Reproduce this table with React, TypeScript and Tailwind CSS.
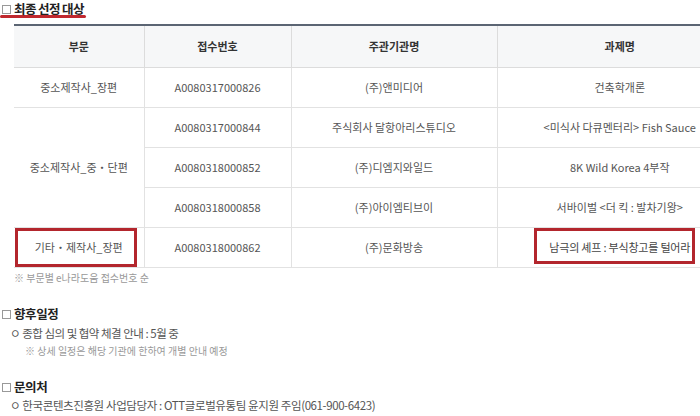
import React from 'react';

const rows = [
  { part: '중소제작사_장편', span: 1, no: 'A0080317000826', org: '(주)앤미디어', title: '건축학개론' },
  { part: '중소제작사_중・단편', span: 3, no: 'A0080317000844', org: '주식회사 달항아리스튜디오', title: '<미식사 다큐멘터리> Fish Sauce' },
  { part: null, span: 0, no: 'A0080318000852', org: '(주)디엠지와일드', title: '8K Wild Korea 4부작' },
  { part: null, span: 0, no: 'A0080318000858', org: '(주)아이엠티브이', title: '서바이벌 <더 킥 : 발차기왕>' },
  { part: '기타・제작사_장편', span: 1, no: 'A0080318000862', org: '(주)문화방송', title: '남극의 셰프 : 부식창고를 털어라', mark: true },
];

function Box() {
  return <span className="inline-block w-[9px] h-[9px] border border-[#999] mr-[3px] translate-y-[1px]" />;
}

export default function App() {
  return (
    <div
      className="w-[700px] h-[416px] overflow-hidden bg-white relative"
      style={{ fontFamily: '"Noto Sans CJK KR", "Noto Sans", sans-serif' }}
    >
      {/* 최종 선정 대상 */}
      <div className="pl-[2px] pt-[2px] h-[15px] flex items-center text-[12.5px] tracking-[-0.6px] font-bold text-[#222] leading-[13px]">
        <Box />
        <span>최종 선정 대상</span>
      </div>
      <div className="w-[86px] h-[3px] bg-[#c0282e] rounded-full" />

      <div className="pl-[14px] pt-[6px]">
        <table className="w-[728px] border-collapse table-fixed text-[11px] text-[#555]">
          <colgroup>
            <col className="w-[130px]" />
            <col className="w-[147px]" />
            <col className="w-[206px]" />
            <col />
          </colgroup>
          <thead>
            <tr className="h-[42px] bg-[#f6f7f8] border-t-2 border-[#5b6573] text-[#333] font-bold">
              <th className="border-b border-[#dcdcdc]">부문</th>
              <th className="border-b border-l border-[#dcdcdc]">접수번호</th>
              <th className="border-b border-l border-[#dcdcdc]">주관기관명</th>
              <th className="border-b border-l border-[#dcdcdc]">과제명</th>
            </tr>
          </thead>
          <tbody>
            {rows.map((r, i) => (
              <tr key={i} className="h-[40px] text-center">
                {r.part !== null && (
                  <td rowSpan={r.span} className="border-b border-[#e2e2e2] relative">
                    {r.mark && <span className="absolute left-[1px] right-[7px] top-0 bottom-0 border-[3px] border-[#b3262d]" />}
                    {r.part}
                  </td>
                )}
                <td className="border-b border-l border-[#e2e2e2]">{r.no}</td>
                <td className="border-b border-l border-[#e2e2e2]">{r.org}</td>
                <td className="border-b border-l border-[#e2e2e2] relative">
                  {r.mark && <span className="absolute left-[36px] w-[161px] top-0 bottom-[3px] border-[3px] border-[#b3262d]" />}
                  <span className={r.mark ? 'text-[#444] tracking-[-0.2px]' : ''}>{r.title}</span>
                </td>
              </tr>
            ))}
          </tbody>
        </table>
        <div className="pt-[5px] text-[10px] text-[#999] leading-none">※ 부문별 e나라도움 접수번호 순</div>
      </div>

      {/* 향후일정 */}
      <div className="pl-[2px] pt-[25px] flex items-center text-[12.5px] tracking-[-0.4px] font-bold text-[#222] leading-none">
        <Box />
        <span>향후일정</span>
      </div>
      <div className="pl-[10px] pt-[8px] text-[11.5px] tracking-[-0.5px] text-[#555] leading-none">ㅇ 종합 심의 및 협약 체결 안내 : 5월 중</div>
      <div className="pl-[25px] pt-[6px] text-[10px] text-[#999] leading-none">※ 상세 일정은 해당 기관에 한하여 개별 안내 예정</div>

      {/* 문의처 */}
      <div className="pl-[2px] pt-[25px] flex items-center text-[12.5px] tracking-[-0.4px] font-bold text-[#222] leading-none">
        <Box />
        <span>문의처</span>
      </div>
      <div className="pl-[10px] pt-[7px] text-[11.5px] tracking-[-0.4px] text-[#555] leading-none whitespace-nowrap">
        ㅇ 한국콘텐츠진흥원 사업담당자 : OTT글로벌유통팀 윤지원 주임(061-900-6423)
      </div>
    </div>
  );
}
